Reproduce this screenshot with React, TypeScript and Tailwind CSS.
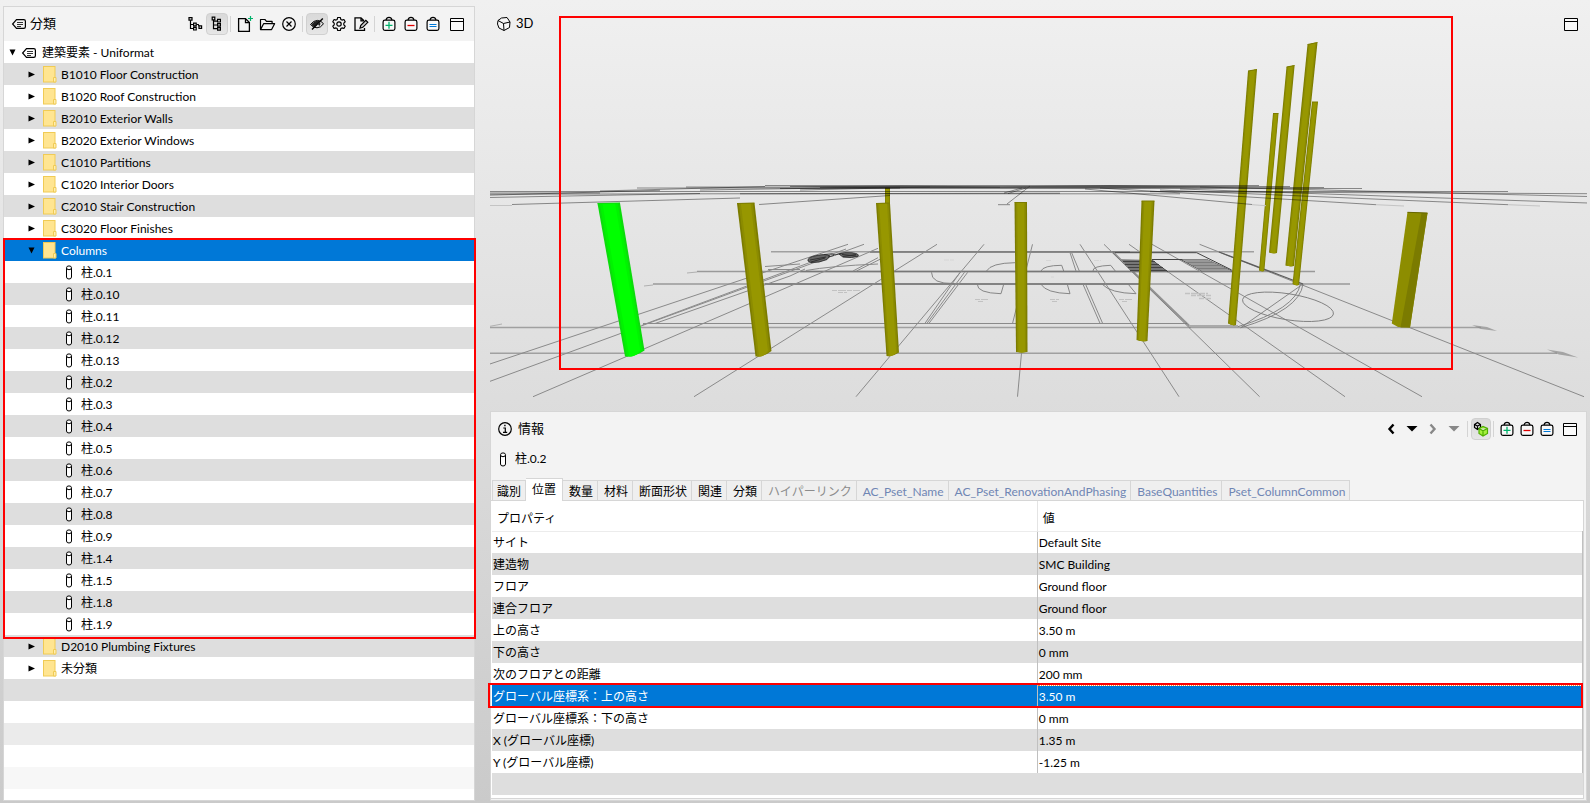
import { type ReactNode } from "react";
import clsx from "clsx";

const ROOT_CHILDREN = [
  "B1010 Floor Construction",
  "B1020 Roof Construction",
  "B2010 Exterior Walls",
  "B2020 Exterior Windows",
  "C1010 Partitions",
  "C1020 Interior Doors",
  "C2010 Stair Construction",
  "C3020 Floor Finishes",
];

const COLUMN_ITEMS = [
  "0.1", "0.10", "0.11", "0.12", "0.13", "0.2", "0.3", "0.4", "0.5",
  "0.6", "0.7", "0.8", "0.9", "1.4", "1.5", "1.8", "1.9",
];

const TABS = [
  { label: "識別" },
  { label: "位置", active: true },
  { label: "数量" },
  { label: "材料" },
  { label: "断面形状" },
  { label: "関連" },
  { label: "分類" },
  { label: "ハイパーリンク", tone: "text-[#8c8c8c]" },
  { label: "AC_Pset_Name", tone: "text-[#6f86b4]" },
  { label: "AC_Pset_RenovationAndPhasing", tone: "text-[#6f86b4]" },
  { label: "BaseQuantities", tone: "text-[#6f86b4]" },
  { label: "Pset_ColumnCommon", tone: "text-[#6f86b4]" },
];

const PROPERTIES = [
  ["サイト", "Default Site"],
  ["建造物", "SMC Building"],
  ["フロア", "Ground floor"],
  ["連合フロア", "Ground floor"],
  ["上の高さ", "3.50 m"],
  ["下の高さ", "0 mm"],
  ["次のフロアとの距離", "200 mm"],
  ["グローバル座標系：上の高さ", "3.50 m"],
  ["グローバル座標系：下の高さ", "0 mm"],
  ["X (グローバル座標)", "1.35 m"],
  ["Y (グローバル座標)", "-1.25 m"],
];
const SELECTED_PROPERTY = 7;

/* ---------- icons ---------- */

function Icon({ size = 16, children }: { size?: number; children: ReactNode }) {
  return (
    <svg
      width={size}
      height={size}
      viewBox={`0 0 ${size} ${size}`}
      fill="none"
      stroke="#000"
      strokeWidth="1.2"
      className="shrink-0"
      aria-hidden="true"
    >
      {children}
    </svg>
  );
}

function TagIcon() {
  return (
    <Icon>
      <path d="M5.5 3.6h7.3q1.6 0 1.6 1.6v5.6q0 1.6-1.6 1.6H5.5L1.6 8z" />
      <path d="M6 6.500h6M6 8.500h6M6 10.500h4" strokeWidth="0.8" />
    </Icon>
  );
}

function FolderIcon() {
  return (
    <svg width="14" height="17" viewBox="0 0 14 17" className="shrink-0" aria-hidden="true">
      <rect x="0.5" y="0.5" width="11.5" height="15.5" fill="#ffe591" stroke="#f0cb55" />
      <path d="M10.5 11.5h2.5v4.5h-2.5z" fill="#ffeeb0" stroke="#f0cb55" />
    </svg>
  );
}

function CylinderIcon() {
  return (
    <svg width="8" height="15" viewBox="0 0 8 15" fill="#fff" stroke="#000" className="shrink-0" aria-hidden="true">
      <path d="M1.500 3v9q0 2 2.500 2t2.500-2V3" />
      <ellipse cx="4" cy="2.800" rx="2.500" ry="1.900" />
    </svg>
  );
}

function TreeLooseIcon() {
  return (
    <Icon>
      <path d="M3.5 4v8.5h3M3.5 8.5h3M9.5 8.5h1.8l.8 1.8" />
      <path d="M2 1.6h3v2.6H2zM6.6 7.2h2.6v2.6H6.6zM6.6 11.4h2.6V14H6.6zM12 9.8h2.6v2.6H12z" fill="#f3f3f3" />
    </Icon>
  );
}

function TreeIcon() {
  return (
    <Icon>
      <path d="M4.5 4v8.7h4M4.5 5.2h4M4.5 9h4" />
      <path d="M3.2 1.2h2.6v2.6H3.2zM8.6 3.4h2.8V6H8.6zM8.6 7.6h2.8v2.6H8.6zM8.6 11.6h2.8v2.6H8.6z" fill="#e4e4e4" />
    </Icon>
  );
}

function NewFileIcon() {
  return (
    <Icon size={18}>
      <path d="M9.5 3.6H2.6v12.8h10.8V7.6zM9.5 3.6v4h3.9" strokeWidth="1.3" />
      <path d="M14.5 1v5M12 3.5h5" stroke="#00b26b" />
    </Icon>
  );
}

function OpenIcon() {
  return (
    <Icon size={18}>
      <path d="M2.5 14.6V4.5h4.4l1.6 1.8h5.6v2.4M2.5 14.6l3.1-5.9h11l-3 5.9z" strokeLinejoin="round" strokeWidth="1.2" />
    </Icon>
  );
}

function CloseIcon() {
  return (
    <Icon>
      <circle cx="8" cy="8" r="6.3" />
      <path d="M5.5 5.5l5 5M10.5 5.5l-5 5" />
    </Icon>
  );
}

function EyeOffIcon() {
  return (
    <Icon>
      <path d="M1.5 8.5Q4.5 4.4 8.5 4.4q3.5 0 6 3.4-2.8 4-6.5 4-3.8 0-6.5-3.3z" strokeWidth="1" />
      <path d="M2.5 8.500Q6 3.500 10.800 5L5 11Q3.500 10.500 2.500 8.500z" fill="#222" stroke="none" />
      <path d="M13.800 2.500L3 13.500" strokeWidth="1.400" />
      <path d="M9 8.500l2-2.500q1 2-.5 4z" fill="#222" stroke="none" />
    </Icon>
  );
}

function GearIcon() {
  return (
    <Icon>
      <path
        d="M6.700 1.500h2.600l.5 1.900 1.200.7 1.900-.6 1.300 2.300-1.400 1.400v1.600l1.400 1.400-1.300 2.300-1.900-.6-1.200.7-.5 1.900H6.700l-.5-1.900-1.200-.7-1.900.6-1.300-2.300 1.400-1.400V7.200L1.800 5.800l1.300-2.300 1.900.6 1.200-.7z"
        strokeLinejoin="round"
      />
      <circle cx="8" cy="8" r="2.200" />
    </Icon>
  );
}

function EditIcon() {
  return (
    <Icon>
      <path d="M11.500 12v2.400H2V1.800h6l3 3M8 1.800v3h3" strokeWidth="1.300" />
      <path d="M7 12.200l.8-2.900 5-5 2 2-5 5z" fill="#ccc" />
    </Icon>
  );
}

function BasketIcon({ kind }: { kind: "add" | "remove" | "set" }) {
  return (
    <Icon>
      <rect x="2.100" y="4.100" width="11.800" height="10.200" rx="1.800" fill="#fff" fillOpacity="0.500" />
      <path d="M5 4q.6-2.600 3-2.600T11 4" />
      {kind === "add" && <path d="M8 5.800v7M4.500 9.300h7" stroke="#00b26b" strokeWidth="1.300" />}
      {kind === "remove" && <path d="M4.500 9.500h7" stroke="#e00000" strokeWidth="1.300" />}
      {kind === "set" && <path d="M4.500 8.500h7M4.500 10.500h7" stroke="#0078d7" strokeWidth="1.200" />}
    </Icon>
  );
}

function WindowIcon() {
  return (
    <Icon>
      <path d="M1.500 2.500h13v12h-13z" fill="#fff" fillOpacity="0.600" strokeWidth="1" />
      <path d="M1.500 5.500h13" strokeWidth="1" />
    </Icon>
  );
}

function CubeIcon() {
  return (
    <Icon>
      <path
        d="M2 4.500l3.500-2.500 5.500-.5 3 4.500-.5 5.500-5.500 3-5-2.500-1.500-4zM2 4.500l5.500 3L14 6M7.500 7.500l.5 7"
        fill="#fff"
        fillOpacity="0.500"
        strokeWidth="1"
        strokeLinejoin="round"
      />
    </Icon>
  );
}

function InfoIcon() {
  return (
    <Icon>
      <circle cx="8" cy="8" r="6.300" />
      <path d="M6.300 7h2v4M6 11.300h4.200" />
      <path d="M7.200 4.500h1.400" strokeWidth="1.500" />
    </Icon>
  );
}

function LinkedCubesIcon() {
  return (
    <Icon>
      <path d="M1.500 3.500l3-2 3 2v3l-3 2-3-2zM1.500 3.500l3 1.500 3-1.500M4.500 5v3.500" />
      <path d="M6 7.500l4-2 4.500 2v5l-4.500 2.500-4-2.500zM6 7.500l4 2.300 4.500-2.300M10 9.800V15" fill="#a4f03c" stroke="#4fae00" />
    </Icon>
  );
}

function Chevron({ flip, color }: { flip?: boolean; color: string }) {
  return (
    <Icon>
      <path d={flip ? "M5.500 3.500l4 4.500-4 4.500" : "M10.500 3.500l-4 4.500 4 4.500"} stroke={color} strokeWidth="2.400" />
    </Icon>
  );
}

function Caret({ color }: { color: string }) {
  return (
    <Icon>
      <path d="M2.500 5h11L8 10.500z" fill={color} stroke="none" />
    </Icon>
  );
}

/* ---------- shared controls ---------- */

function ToolButton({ label, pressed, small, children }: { label: string; pressed?: boolean; small?: boolean; children: ReactNode }) {
  return (
    <button
      type="button"
      aria-label={label}
      className={clsx(
        "flex h-[22px] items-center justify-center rounded",
        small ? "w-5" : "w-[22px]",
        pressed && "border border-[#d0d0d0] bg-linear-to-b from-[#d9d9d9] to-[#e6e6e6]",
      )}
    >
      {children}
    </button>
  );
}

function Separator() {
  return <span className="mr-[3px] ml-[2px] h-4 w-px bg-[#d4d4d4]" />;
}

/* ---------- classification tree ---------- */

function TreeRow({ level, open, icon, label, striped, selected }: {
  level: 0 | 1 | 2;
  open?: boolean;
  icon: ReactNode;
  label: string;
  striped?: boolean;
  selected?: boolean;
}) {
  return (
    <div
      className={clsx(
        "flex h-[22px] items-center pt-px text-[12px]",
        level === 0 && "gap-[5px] pl-[5px]",
        level === 1 && "gap-[4px] pl-[24px]",
        level === 2 && "gap-[8px] pl-[61px]",
        selected ? "bg-[#0078d7] text-white" : striped ? "bg-[#dedede]" : "bg-white",
      )}
    >
      {level < 2 && (
        <button type="button" aria-label={open ? "閉じる" : "開く"} className={clsx("shrink-0", level === 1 && "mr-1")}>
          <svg width="7" height="7" viewBox="0 0 7 7" aria-hidden="true">
            <path d={open ? "M0.500 0.500h6L3.500 6.500z" : "M0.500 0.500v6L7 3.500z"} />
          </svg>
        </button>
      )}
      {icon}
      <span>{label}</span>
    </div>
  );
}

function ClassificationPanel() {
  return (
    <aside className="ml-[3px] flex w-[472px] shrink-0 flex-col border border-[#d6d6d6] bg-white">
      <header className="flex h-[34px] items-center bg-[#f3f3f3] pr-[6px] pl-[7px]">
        <TagIcon />
        <h2 className="ml-[3px] text-[13px]">分類</h2>
        <div className="ml-auto flex items-center">
          <ToolButton label="階層"><TreeLooseIcon /></ToolButton>
          <ToolButton label="ツリー" pressed><TreeIcon /></ToolButton>
          <Separator />
          <ToolButton label="新規"><NewFileIcon /></ToolButton>
          <ToolButton label="開く"><OpenIcon /></ToolButton>
          <ToolButton label="閉じる"><CloseIcon /></ToolButton>
          <Separator />
          <ToolButton label="非表示" pressed><EyeOffIcon /></ToolButton>
          <ToolButton label="設定"><GearIcon /></ToolButton>
          <ToolButton label="編集"><EditIcon /></ToolButton>
          <Separator />
          <ToolButton label="追加"><BasketIcon kind="add" /></ToolButton>
          <ToolButton label="削除"><BasketIcon kind="remove" /></ToolButton>
          <ToolButton label="設定する"><BasketIcon kind="set" /></ToolButton>
          <span className="w-[2px]" />
          <ToolButton label="最大化"><WindowIcon /></ToolButton>
        </div>
      </header>

      <TreeRow level={0} open icon={<TagIcon />} label="建築要素 - Uniformat" />
      {ROOT_CHILDREN.map((label, index) => (
        <TreeRow key={label} level={1} icon={<FolderIcon />} label={label} striped={index % 2 === 0} />
      ))}

      <div className="relative">
        <TreeRow level={1} open selected icon={<FolderIcon />} label="Columns" />
        {COLUMN_ITEMS.map((id, index) => (
          <TreeRow key={id} level={2} icon={<CylinderIcon />} label={`柱.${id}`} striped={index % 2 === 1} />
        ))}
        <div className="pointer-events-none absolute -top-px -right-0.5 -bottom-1 -left-px border-2 border-[#fe0000]" />
      </div>

      <TreeRow level={1} icon={<FolderIcon />} label="D2010 Plumbing Fixtures" striped />
      <TreeRow level={1} icon={<FolderIcon />} label="未分類" />

      <div className="h-[22px] bg-[#dedede]" />
      <div className="h-[22px]" />
      <div className="h-[22px] bg-[#ebebeb]" />
      <div className="h-[22px]" />
      <div className="h-[22px] bg-[#f7f7f7]" />
    </aside>
  );
}

/* ---------- 3D view ---------- */

// top-left, top-right, bottom-right, bottom-left
const COLUMNS = [
  [885, 188, 890, 188, 890, 204, 885, 204],
  [737, 203.5, 754.5, 203, 771.5, 351, 755.5, 356.5],
  [876, 203.5, 890, 203, 899, 352.5, 886.5, 356],
  [1014.5, 202.5, 1027, 202.5, 1027.5, 352, 1016, 352],
  [1141.5, 201, 1154.5, 201, 1147.5, 341, 1136.5, 340],
  [1248, 71, 1257, 69.5, 1236, 325, 1228, 323.5],
  [1273, 113.5, 1278.5, 113.5, 1264.3, 271, 1259, 270.5],
  [1286.5, 67, 1294.6, 65.5, 1277, 253, 1269, 252.5],
  [1312, 102, 1318, 102, 1299, 285, 1292.5, 284],
  [1307.5, 44.5, 1317.5, 42.5, 1294, 266, 1285.4, 265.5],
];

// nested bands, dark at the rim and light in the middle, give the round shading
const SHADE_STEPS = [0, 0.1, 0.22];

function Column({ points, shades }: { points: number[]; shades: string[] }) {
  const [ax, ay, bx, by, cx, cy, dx, dy] = points;
  return (
    <g>
      {SHADE_STEPS.map((step, index) => {
        const top = (bx - ax) * step;
        const bottom = (cx - dx) * step;
        const dip = Math.max(cy, dy) + 0.8;
        return (
          <path
            key={step}
            d={`M${ax + top} ${ay}L${bx - top} ${by}L${cx - bottom} ${cy}Q${(cx + dx) / 2} ${dip} ${dx + bottom} ${dy}z`}
            fill={shades[index]}
          />
        );
      })}
      <path d={`M${ax} ${ay}L${bx} ${by}`} stroke={shades[0]} strokeWidth="1" />
    </g>
  );
}

function Scene() {
  return (
    <svg
      viewBox="490 6 1097 406"
      preserveAspectRatio="xMidYMin slice"
      fill="none"
      className="absolute inset-0 size-full"
      aria-hidden="true"
    >
      {/* floor plan */}
      <g stroke="#8a8a8a" strokeWidth="1">
        <path d="M771 251.700H1254M489 327.500H1481M489 353.300H1557" strokeWidth="1.500" stroke="#a0a0a0" />
        <path d="M697 271.500H1315M653 284H1350" strokeWidth="1.500" stroke="#999" />
        <path d="M870 252H1130M800 271.500H1235M765 284H1140" stroke="#777" strokeWidth="1.600" />
        <path d="M643 323.500H1187" />
        <path d="M848 244.300L489 364.300M864 244.300L489 381.700M642.500 325L846 249M655 323.500L790 276L805 269" />
        <path d="M878 248.300L533 396.700M937 244.300L694 396.700M984 244.300L856 396.700M1032.500 244.300L1012.500 323.500M1021.500 353L1017.500 396.700" />
        <path d="M1080 244.300L1179 396.700M1104 244.300L1259.600 396.700M1129 244.300L1345 396.700M1152 244.300L1422 396.700M1199.600 244.300L1584 396.700" />
        <path d="M960 272.300L925 323.300M964.500 272.300L927 323.300M967.700 272.300L929 323.300" />
        <path d="M1070 252.600L1076 271M1071.600 252.600L1079.300 271M1083 284.300L1100 323.300M1085.600 284.300L1102.600 323.300" />
        <path d="M878 257.700L853 271M880 259.300L856.500 271M765 266.500L800 264M768 269.500H800M806 270.500Q830 266 878 264" />
        <path d="M489 326.500L502 324M653 285L644 286M697 272L687 273" stroke="#b0b0b0" />
      </g>
      <g stroke="#7c7c7c" strokeWidth="0.900">
        <path d="M986.500 271Q991 263 1015 262.700M931.500 272.300Q931 284 954 283.500" />
        <path d="M977.300 284.300Q977 293 1001 293.700L1003.700 284.300" />
        <path d="M1041 284.300Q1046 293 1070 293.700L1067.300 284.300" />
        <path d="M1102.300 284.300Q1110 293 1136 293.700L1128.300 284.300" />
        <path d="M1041 271Q1043 265.500 1061.700 265.300L1063.700 271M1093 271Q1092 266 1110.700 265.300L1115.300 271" />
        <ellipse cx="1288" cy="306.800" rx="46" ry="13" transform="rotate(9 1288 306.800)" />
        <path d="M1300.400 284Q1296 309 1237.900 326.700M1303 284Q1300 310 1240.700 327.700z" />
      </g>
      <path d="M1113 252.300L1190.700 327.300" stroke="#707070" strokeWidth="2" strokeOpacity="0.700" />
      <path d="M1219 252L1303 284" stroke="#5c5c5c" strokeWidth="1.300" />
      <path d="M1189 326H1238" stroke="#aaa" strokeWidth="2" />
      <path d="M1115 252.700H1196.700L1231.700 270M1152 259.500H1206.700L1231.700 271M1181 259.500L1202 271M1152 260L1168 272" stroke="#444" strokeWidth="1" />
      <path d="M1121 259.300L1151.700 260L1167.300 271.700H1132z" fill="#777" />
      <path d="M1181.700 259.300H1206.700L1231.700 271H1201.700z" fill="#999" />
      <path d="M1123 261.500H1155M1125 264.500H1159M1128 267.500H1163M1130 270.500H1167" stroke="#3c3c3c" strokeWidth="0.900" />
      <path d="M1186 262.500H1213M1192 265.500H1220M1197 268.500H1226" stroke="#777" strokeWidth="0.800" />
      <g stroke="#2c2c2c" strokeWidth="0.900">
        <path d="M808 261q-1-4 9-5.500 9-2 13 .5l-3 3.500q-8 3.500-16 3zM839 254q5-2 13-1.200 8 1 6 3.500-6 2-15 .8z" fill="#666" />
        <path d="M810 260l16-3M811 262l14-4M842 254.500l14 1.500M843 256.500l13-2M824 254.500l8-.7 3 1.200 6-1.500M828 257l6-1.500" />
      </g>
      <g stroke="#c2c2c2" strokeWidth="1" strokeDasharray="5 1 8 1">
        <path d="M832 290.500H860M838 292.500H847M975 299.500H988M978 301.500H984M1050 299.500H1059M1052 301.500H1057M1119 299.500H1132M1122 301.500H1128" />
        <path d="M944 260H954M1046 260.500H1052M1094 260.500H1101M1051 277H1054" stroke="#d6d6d6" />
        <path d="M1185 293.500H1208M1191 295.500H1212M1199 298.500H1211" strokeWidth="1.500" />
      </g>
      <path d="M1472 325l15 2 10 4-16-2zM1547 349.500l16 2.500 15 5.500-19-3z" fill="#8a8a8a" fillOpacity="0.700" />

      {/* columns */}
      <Column points={[597.5, 203.5, 620, 203, 644.5, 350.5, 625, 356.5]} shades={["#0cdc0c", "#00f400", "#00ff00"]} />
      {COLUMNS.map((points) => (
        <Column key={points[0]} points={points} shades={["#7c7c00", "#8c8c00", "#979700"]} />
      ))}
      <path d="M1407.500 212L1427.500 213L1410 327.500L1398 327L1391.800 323.500z" fill="#8d8d00" />
      <path d="M1421.500 213H1427.500L1410 327.500H1400.500z" fill="#7b7b00" />
      <path d="M1407.500 212.300L1427.500 213" stroke="#666600" />

      {/* upper storey, seen edge-on */}
      <g stroke="#000" strokeOpacity="0.420" strokeWidth="1">
        <path d="M489 191.500H640M489 194.200L1060 193.200M489 195.200L660 190.300M489 197.500L700 193.500M489 193H600" />
        <path d="M512 204.500L740 198M759 204.500L890 195.500M637 188H900M686 187L1000 187.300M600 191L765 186.500" />
        <path d="M765 185.500H1259M790 186.500H1290M820 187.500H1324M780 188.500H1362M640 191.500H1508M700 190L900 187M800 190L930 187" />
        <path d="M740 193.800H1180M1150 191.700L1588 193.700" />
        <path d="M1085 189L1252 204.500M1100 188L1376 204.700M1160 190L1508 204.700M1180 189L1588 203M1200 187L1588 196.500" />
        <path d="M998 204.700H1010M1007 204L1030 186M1004 193L1022 188M1008 193.500L1026 188" />
      </g>
      <path d="M790 186.500L900 185.500L1000 186.500L1110 185L1250 187L1130 188.200L900 188z" fill="#333" fillOpacity="0.600" />
      <path d="M489 205.500H512M1252 204.700L1266 205.700M1376 204.700L1404 206M1508 204.700L1540 206" stroke="#c4c4c4" />

      <rect x="560" y="17" width="892" height="352" stroke="#fe0000" strokeWidth="2" />
    </svg>
  );
}

function ModelView() {
  return (
    <section className="relative h-[405px]">
      <Scene />
      <header className="relative flex h-9 items-center pr-[5px] pl-[6px]">
        <CubeIcon />
        <h2 className="ml-1 text-[13px]">3D</h2>
        <div className="ml-auto">
          <ToolButton label="最大化"><WindowIcon /></ToolButton>
        </div>
      </header>
    </section>
  );
}

/* ---------- info panel ---------- */

function InfoPanel() {
  return (
    <section className="flex flex-1 flex-col border border-[#d6d6d6] bg-[#f3f3f3] pr-[2px] pb-px">
      <header className="flex h-[34px] items-center pr-[3px] pl-[6px]">
        <InfoIcon />
        <h2 className="ml-[5px] text-[13px]">情報</h2>
        <div className="ml-auto flex items-center">
          <ToolButton label="戻る" small><Chevron color="#000" /></ToolButton>
          <ToolButton label="戻る履歴"><Caret color="#000" /></ToolButton>
          <ToolButton label="進む" small><Chevron flip color="#888" /></ToolButton>
          <ToolButton label="進む履歴"><Caret color="#888" /></ToolButton>
          <Separator />
          <ToolButton label="連動" small pressed><LinkedCubesIcon /></ToolButton>
          <Separator />
          <ToolButton label="追加" small><BasketIcon kind="add" /></ToolButton>
          <ToolButton label="削除" small><BasketIcon kind="remove" /></ToolButton>
          <ToolButton label="設定する" small><BasketIcon kind="set" /></ToolButton>
          <span className="w-[2px]" />
          <ToolButton label="最大化"><WindowIcon /></ToolButton>
        </div>
      </header>
      <div className="flex h-[26px] items-center gap-2 pl-[8px] text-[12px]">
        <CylinderIcon />
        <span>柱.0.2</span>
      </div>

      <div role="tablist" className="mt-[6px] flex h-[22px] items-end pl-px text-[12px]">
        {TABS.map(({ label, active, tone }) => (
          <button
            key={label}
            type="button"
            role="tab"
            aria-selected={Boolean(active)}
            className={clsx(
              "border-t border-r border-[#d6d6d6] whitespace-nowrap first:border-l",
              active ? "relative -mb-px h-[23px] bg-white px-[6px]" : "h-5 bg-[#efefef] pt-0.5 pr-[4px] pl-[6px] first:pl-[4px]",
              tone,
            )}
          >
            {label}
          </button>
        ))}
      </div>

      <div className="flex-1 border-t border-r border-b border-[#d6d6d6] bg-white pl-px">
        <table className="w-full table-fixed border-collapse text-left text-[12px]">
          <thead>
            <tr className="h-[30px] border-b border-[#ececec]">
              <th className="w-1/2 border-r border-[#e4e4e4] pt-1.5 pb-0 pl-[5px] font-normal">プロパティ</th>
              <th className="pt-1.5 pb-0 pl-[5px] font-normal">値</th>
            </tr>
          </thead>
          <tbody>
            {PROPERTIES.map(([name, value], index) => {
              const selected = index === SELECTED_PROPERTY;
              return (
                <tr
                  key={name}
                  className={clsx(
                    "h-[22px]",
                    selected ? "relative bg-[#0078d7] text-white" : index % 2 === 1 && "bg-[#dedede]",
                  )}
                >
                  <td className="border-r border-[#c0c0c0] pt-0.5 pb-0 pl-px">
                    {name}
                    {selected && (
                      <span className="pointer-events-none absolute -top-0.5 right-0 -bottom-px -left-1 border-2 border-[#fe0000]" />
                    )}
                  </td>
                  <td className={clsx("border-r border-[#c0c0c0] pt-0.5 pb-0 pl-px", selected && "border-t border-l border-dotted border-t-[#ff8728] border-l-[#ff8728]")}>
                    {value}
                  </td>
                </tr>
              );
            })}
            <tr className="h-[22px] bg-[#dedede]">
              <td colSpan={2} />
            </tr>
          </tbody>
        </table>
      </div>
    </section>
  );
}

export default function App() {
  return (
    <div className="flex min-h-screen gap-[15px] bg-linear-to-b from-[#f0f0f0] to-[#cacaca] pt-[6px] pr-[3px] pb-[2px] font-[Lato,'Noto_Sans_CJK_JP',sans-serif] text-black">
      <ClassificationPanel />
      <main className="flex min-w-0 flex-1 flex-col">
        <ModelView />
        <InfoPanel />
      </main>
    </div>
  );
}
